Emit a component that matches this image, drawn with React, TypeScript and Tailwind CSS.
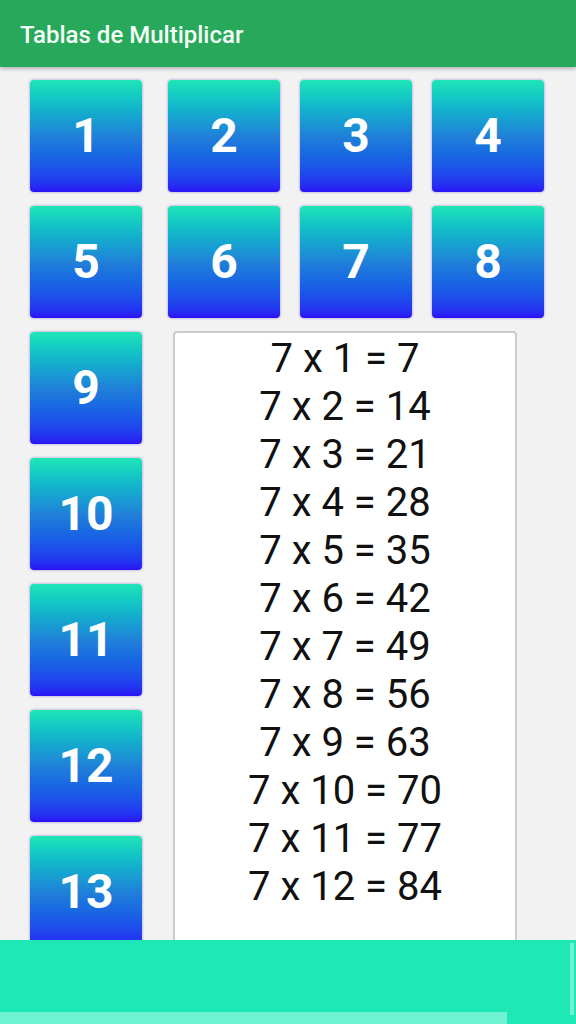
import React from "react";

const tableOf = 7;

function NumButton({ n }: { n: number }) {
  return (
    <button className="flex h-[112px] w-[112px] shrink-0 items-center justify-center rounded-[4px] bg-gradient-to-b from-[#1fe6b6] via-[#2180d8] to-[#2a10f5] text-[48px] font-bold leading-none text-white shadow-[0_0_2px_1px_rgba(90,70,190,0.28)] font-['Roboto',sans-serif]">
      {n}
    </button>
  );
}

export default function App() {
  const rows = Array.from({ length: 12 }, (_, i) => i + 1);

  return (
    <div className="flex h-[1024px] w-[576px] flex-col overflow-hidden bg-[#f2f2f2] font-['Roboto',sans-serif]">
      <header className="relative z-10 flex h-[67px] shrink-0 items-center bg-[#27a85a] pl-5 shadow-[0_2px_4px_rgba(0,0,0,0.25)]">
        <h1 className="pt-[3px] text-[24px] font-medium text-[#f4fff6]">Tablas de Multiplicar</h1>
      </header>

      <main className="flex-1 overflow-hidden pl-[30px] pt-[13px]">
        <div className="flex">
          <NumButton n={1} />
          <div className="ml-[26px] flex gap-[20px]">
            <NumButton n={2} />
            <NumButton n={3} />
            <NumButton n={4} />
          </div>
        </div>
        <div className="mt-[14px] flex">
          <NumButton n={5} />
          <div className="ml-[26px] flex gap-[20px]">
            <NumButton n={6} />
            <NumButton n={7} />
            <NumButton n={8} />
          </div>
        </div>

        <div className="mt-[14px] flex items-start">
          <div className="flex flex-col gap-[14px]">
            {[9, 10, 11, 12, 13].map((n) => (
              <NumButton key={n} n={n} />
            ))}
          </div>
          <div className="ml-[31px] mt-[-1px] h-[700px] w-[344px] rounded-[4px] border-2 border-[#cccccc] bg-white pt-[2px]">
            {rows.map((i) => (
              <p key={i} className="text-center text-[40px] leading-[48px] text-[#111111]">
                {tableOf} x {i} = {tableOf * i}
              </p>
            ))}
          </div>
        </div>
      </main>

      <footer className="relative h-[84px] shrink-0 bg-[#1ee9b6]">
        <div className="absolute bottom-0 left-0 h-[12px] w-[507px] bg-[#6ff3d3]" />
        <div className="absolute right-[2px] top-[3px] h-[72px] w-[4px] bg-[#6ff3d3]" />
      </footer>
    </div>
  );
}
